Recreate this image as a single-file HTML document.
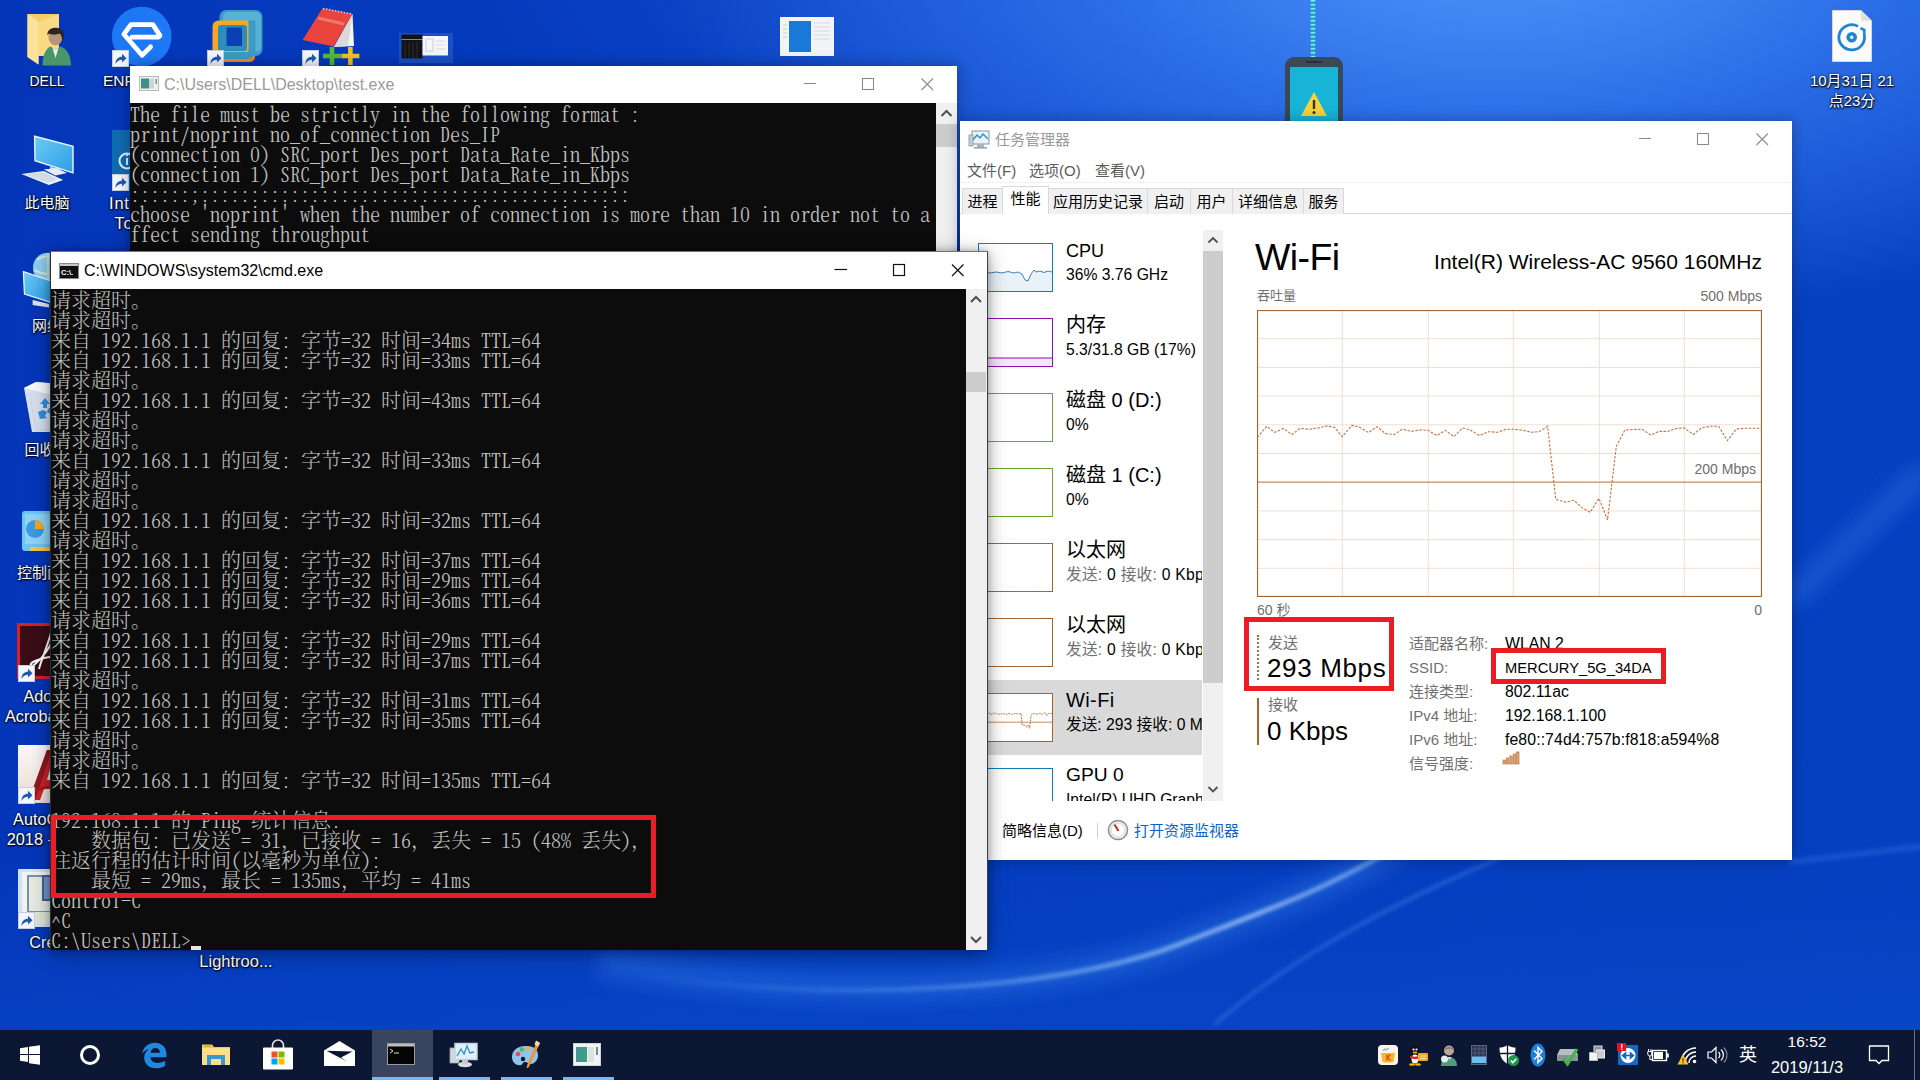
<!DOCTYPE html>
<html lang="zh-CN">
<head>
<meta charset="utf-8">
<title>Desktop</title>
<style>
*{box-sizing:border-box;margin:0;padding:0}
html,body{width:1920px;height:1080px;overflow:hidden}
body{position:relative;font-family:"Liberation Sans","Noto Sans CJK SC",sans-serif;font-size:15px;color:#000;
 background:#0841c2}
.abs{position:absolute}
#wall{position:absolute;left:0;top:0;width:1920px;height:1080px;
 background:
  radial-gradient(ellipse 840px 360px at 1500px -40px,rgba(78,150,250,.95) 0%,rgba(60,130,245,.6) 45%,rgba(40,100,230,0) 100%),
  radial-gradient(ellipse 1000px 480px at 1450px -120px,rgba(40,105,232,.9) 0%,rgba(30,90,220,.45) 60%,rgba(10,66,196,0) 100%),
  linear-gradient(180deg,rgba(4,60,190,0) 80%,rgba(8,78,205,.55) 100%),linear-gradient(90deg,#0536ba 0%,#053cbf 40%,#0540c1 100%)}
/* desktop icon labels */
.dl{position:absolute;color:#fff;font-size:15px;line-height:20px;white-space:nowrap;text-align:center;
 text-shadow:0 1px 2px rgba(0,0,0,.9),0 0 3px rgba(0,0,0,.7),1px 1px 1px rgba(0,0,0,.6)}

/* windows */
.win{position:absolute;background:#fff}
.tb{position:absolute;left:0;top:0;right:0;height:37px;background:#fff}
.tt{position:absolute;top:0;height:37px;line-height:37px;font-size:16px;white-space:nowrap}
.con{position:absolute;background:#0c0c0c;color:#c2c2c2;overflow:hidden;
 font-family:"Noto Serif CJK SC","Liberation Serif",serif;font-size:20px;line-height:20px;font-weight:300;padding-top:1px;
 font-feature-settings:"hwid","liga" 0,"clig" 0;font-variant-ligatures:none;white-space:pre}
.con div{height:20px}
.fw{font-feature-settings:"liga" 0}
.sb{position:absolute;background:#f0f0f0}
.cap{position:absolute;top:0;width:47px;height:37px}

.mn{margin-top:1px;font-size:15px;line-height:22px;color:#5c5c5c;white-space:nowrap}
.tab{position:absolute;top:67px;height:26px;background:#f0f0f0;border:1px solid #d9d9d9;border-bottom:none;font-size:15px;line-height:25px;text-align:center;white-space:nowrap;color:#000}
.tab.sel{top:65px;height:28px;background:#fff;line-height:24px}

.it{position:absolute;left:0;width:243px;height:75px}
.it1{position:absolute;left:106px;top:5.5px;font-size:20px;line-height:28px;white-space:nowrap}
.it2{position:absolute;left:106px;top:35px;font-size:15.7px;line-height:20px;white-space:nowrap}
.g{color:#707070}
.gl{font-size:13px;line-height:18px;color:#707070;white-space:nowrap}
.sl{font-size:15px;line-height:22px;color:#707070;white-space:nowrap}
.sv{font-size:26px;line-height:34px;white-space:nowrap}
.dk{font-size:15px;line-height:22px;color:#707070;white-space:nowrap}
.dv{font-size:15.8px;line-height:22px;white-space:nowrap}

.red{border:5px solid #ec1c24}
.ul{top:47px;height:3px;background:#76b9ed}
/* taskbar */
#task{position:absolute;left:0;top:1030px;width:1920px;height:50px;background:#0b1733}
</style>
</head>
<body>
<div id="wall"></div>
<svg class="abs" style="left:0;top:0" width="1920" height="1030" viewBox="0 0 1920 1030">
 <defs><filter id="b1" x="-20%" y="-20%" width="140%" height="140%"><feGaussianBlur stdDeviation="2.2"/></filter><filter id="b2" x="-20%" y="-20%" width="140%" height="140%"><feGaussianBlur stdDeviation="10"/></filter>
 <linearGradient id="sg" x1="0" x2="1" y1="0" y2="0"><stop offset="0" stop-color="#6fb0ff" stop-opacity="0"/><stop offset=".45" stop-color="#8cc4ff" stop-opacity=".55"/><stop offset=".8" stop-color="#bfe0ff" stop-opacity=".95"/><stop offset="1" stop-color="#9fd0ff" stop-opacity=".7"/></linearGradient></defs>
 <path d="M600 962C820 1004 1060 992 1180 944S1320 892 1400 846" stroke="#3d86ee" stroke-opacity=".35" stroke-width="26" fill="none" filter="url(#b2)"/>
 <path d="M640 975C840 1004 1060 990 1180 944S1320 890 1400 846" stroke="url(#sg)" stroke-width="3.500" fill="none" filter="url(#b1)"/>
 <path d="M1215 1024C1260 985 1340 925 1500 858" stroke="#6fb0ff" stroke-opacity=".5" stroke-width="2" fill="none" filter="url(#b1)"/>
 <path d="M1790 600L1925 470" stroke="#3f82ea" stroke-opacity=".35" stroke-width="22" fill="none" filter="url(#b2)"/>
 <path d="M1790 862L1925 846" stroke="#4a8cf0" stroke-opacity=".3" stroke-width="5" fill="none" filter="url(#b1)"/>
</svg>

<!-- desktop icons -->
<svg class="abs" style="left:24px;top:10px" width="52" height="58" viewBox="0 0 52 58"><path d="M3.500 4H35v42H14.500v8.500L3.500 47z" fill="#f6cf6a"/><path d="M3.500 4l11 7.500V54.500L3.500 47z" fill="#fbe39b"/><path d="M14.500 11.500L35 4v42H14.500z" fill="#f9db85"/><ellipse cx="31.500" cy="27" rx="7" ry="8.500" fill="#b9937c"/><path d="M23.500 25.500c-1.500-10 17-10.500 16.500 0 0 3-1 5-2 6 .5-4-1-7-2.500-8-3 1.500-8 1.500-10.500 0-1 1-1.500 1.500-1.500 2z" fill="#2b2620"/><path d="M18.500 55.500c0-11 4-17.500 8-19l5 3 5-3c6 2 10.500 8 10.500 19z" fill="#4a966a"/><path d="M28.500 38l3 10 3-10-3 1.500z" fill="#e9f1ec"/></svg>
<div class="dl" style="left:7px;top:71px;width:80px;font-size:14px">DELL</div>

<svg class="abs" style="left:111px;top:5px" width="62" height="62" viewBox="0 0 62 62"><circle cx="30.700" cy="31.500" r="29.800" fill="#1d78f6"/><path d="M39.600 41.900L31.100 50.300 12.900 29.200 19.900 19.600H41.900L49 30.600 47.500 32.200H21" stroke="#fff" stroke-width="4.800" fill="none" stroke-linejoin="round" stroke-linecap="round"/></svg>
<div class="dl" style="left:103px;top:71px;text-align:left;font-size:15.5px">ENF</div>
<svg class="abs" style="left:112px;top:50px" width="17" height="17" viewBox="0 0 17 17"><rect x=".5" y=".5" width="16" height="16" fill="#f3f6fb" stroke="#c5cfe0"/><path d="M3.500 14C3.500 9 6.500 6.800 10 6.800V3.800L14.500 8.200 10 12.600V9.800C7.500 9.800 5.200 10.800 3.500 14z" fill="#1f58b4"/></svg>

<svg class="abs" style="left:209px;top:8px" width="58" height="58" viewBox="0 0 58 58"><rect x="6" y="40" width="40" height="14" rx="5" fill="#ef8a1d"/><rect x="10.500" y="2" width="43" height="46" rx="7" fill="#3a9cc6"/><rect x="14" y="4" width="38" height="40" rx="5" fill="#56b3d6"/><rect x="3.500" y="12.500" width="39.500" height="36" rx="6" fill="#f7a823"/><rect x="9" y="17" width="29" height="26" rx="3" fill="#2f8db9"/><path d="M10.500 44V24a6 6 0 0 1 6-6h26.500v-5.500h10V42a6 6 0 0 1-6 6H16.500a6 6 0 0 1-6-4z" fill="none"/><path d="M43 12.500v30a5 5 0 0 1-5 5h-27" stroke="#3a9cc6" stroke-width="7" fill="none"/><rect x="17.500" y="19.500" width="15.500" height="18.500" fill="#0a3fb6"/></svg>
<svg class="abs" style="left:207px;top:50px" width="17" height="17" viewBox="0 0 17 17"><rect x=".5" y=".5" width="16" height="16" fill="#f3f6fb" stroke="#c5cfe0"/><path d="M3.500 14C3.500 9 6.500 6.800 10 6.800V3.800L14.500 8.200 10 12.600V9.800C7.500 9.800 5.200 10.800 3.500 14z" fill="#1f58b4"/></svg>

<svg class="abs" style="left:298px;top:6px" width="64" height="62" viewBox="0 0 64 62"><path d="M54.500 8L56 40 36 41z" fill="#f4f4f2"/><path d="M54.500 8L50 40 36 41z" fill="#dadad6"/><path d="M24.300 2.400L54.500 8 35.500 40.400 4.600 34z" fill="#e9453d"/><path d="M20 12L46 18" stroke="#f58d84" stroke-width="3" opacity=".7"/><path d="M25 2.500L54 8" stroke="#f7c9c4" stroke-width="1.600" stroke-dasharray="1.500 1.500"/><path d="M34 41v18M25 50h18" stroke="#55b937" stroke-width="4.600"/><path d="M52.400 41v18M43.400 50h18" stroke="#f1c21f" stroke-width="4.600"/></svg>
<svg class="abs" style="left:302px;top:50px" width="17" height="17" viewBox="0 0 17 17"><rect x=".5" y=".5" width="16" height="16" fill="#f3f6fb" stroke="#c5cfe0"/><path d="M3.500 14C3.500 9 6.500 6.800 10 6.800V3.800L14.500 8.200 10 12.600V9.800C7.500 9.800 5.200 10.800 3.500 14z" fill="#1f58b4"/></svg>

<svg class="abs" style="left:399px;top:33px" width="54" height="30" viewBox="0 0 54 30"><rect width="54" height="30" fill="#1b50c4"/><rect x="2.500" y="1.500" width="21" height="24" fill="#121316"/><path d="M2.500 6.500h21" stroke="#9aa" stroke-width=".8"/><path d="M6 9v16M10 9v16M14 9v16M18 9v16" stroke="#2a2622" stroke-width="1.500"/><rect x="23.500" y="3" width="25.500" height="19.500" fill="#f4f6f9"/><rect x="27" y="6" width="7" height="12" fill="none" stroke="#c9cfd8"/><path d="M37 8h9M37 12h9M37 16h9" stroke="#d5dae2"/></svg>

<svg class="abs" style="left:780px;top:17px" width="54" height="39" viewBox="0 0 54 39"><rect width="54" height="39" fill="#f3f4f6"/><rect x="9" y="4" width="22" height="31" fill="#1879d9"/><path d="M3 8h4M3 12h4M3 16h4M3 20h4" stroke="#c9ced6"/><path d="M34 6h16M34 10h16M34 14h16M34 18h16M34 22h16" stroke="#d5d9df"/></svg>

<!-- phone + cable -->
<svg class="abs" style="left:1284px;top:0" width="60" height="122" viewBox="0 0 60 122"><path d="M29 0V58" stroke="#1aa6cc" stroke-width="4.500"/><path d="M29 0V58" stroke="#8fe6f5" stroke-width="4.500" stroke-dasharray="1.500 2.500"/><path d="M1 66a9 9 0 0 1 9-9h40a9 9 0 0 1 9 9v56H1z" fill="#3a4957"/><rect x="6" y="67" width="48" height="55" fill="#17b4d8"/><rect x="22" y="61" width="16" height="2" rx="1" fill="#23303b"/><path d="M30 92l13 24H17z" fill="#f5d33a"/><rect x="28.800" y="100" width="2.400" height="9" fill="#3b3010"/><circle cx="30" cy="112.500" r="1.500" fill="#3b3010"/></svg>

<!-- file top right -->
<svg class="abs" style="left:1832px;top:10px" width="40" height="52" viewBox="0 0 40 53" preserveAspectRatio="none"><path d="M.500 .500H29L39.500 11V52.500H.500z" fill="#fbfbfa" stroke="#e4e1d8" stroke-width=".8"/><path d="M29 .500V11H39.500z" fill="#e6e2d2"/><path d="M26 16.700A12.800 12.800 0 1 0 32.300 25.500" stroke="#1c86d6" stroke-width="2.800" fill="none"/><path d="M32.300 26V20.200L28.500 18.600" stroke="#1c86d6" stroke-width="2.500" fill="none"/><circle cx="19.700" cy="27.800" r="5.300" fill="#1c86d6"/><circle cx="19.700" cy="27.800" r="1.700" fill="#fbfbfa"/></svg>
<div class="dl" style="left:1802px;top:70.5px;width:100px;line-height:20px">10月31日 21<br>点23分</div>

<!-- left column -->
<svg class="abs" style="left:20px;top:133px" width="56" height="56" viewBox="0 0 56 56"><defs><linearGradient id="pcg" x1="0" y1="0" x2="1" y2="1"><stop offset="0" stop-color="#6ccaf7"/><stop offset="1" stop-color="#2b9fe6"/></linearGradient></defs><path d="M14.600 3.200L53 13.400V39.900L15 27.700z" fill="url(#pcg)" stroke="#e6f5fd" stroke-width="1.400"/><path d="M30 33.500l10 3.200v4.300l-10-2.500z" fill="#c5d2dc"/><path d="M23.800 36.500l12.500-1.600 10.700 5-11.500 2.600z" fill="#e6edf2"/><path d="M1.400 40.900L23.800 37.900 43.200 47 28.900 52.100z" fill="#eef2f6"/><path d="M5 41.300l18-2.400 15.500 7.300-10.500 3.900z" fill="#cbd5de" opacity=".8"/></svg>
<div class="dl" style="left:7px;top:193px;width:80px">此电脑</div>

<svg class="abs" style="left:112px;top:130px" width="60" height="60" viewBox="0 0 60 60"><rect width="60" height="60" fill="#0f6cb2"/><circle cx="15" cy="31" r="7.500" fill="none" stroke="#e3f1fb" stroke-width="2"/><path d="M15 28v7" stroke="#e3f1fb" stroke-width="2"/><circle cx="15" cy="25" r="1.200" fill="#e3f1fb"/></svg>
<svg class="abs" style="left:112px;top:174px" width="17" height="17" viewBox="0 0 17 17"><rect x=".5" y=".5" width="16" height="16" fill="#f3f6fb" stroke="#c5cfe0"/><path d="M3.500 14C3.500 9 6.500 6.800 10 6.800V3.800L14.500 8.200 10 12.600V9.800C7.500 9.800 5.200 10.800 3.500 14z" fill="#1f58b4"/></svg>
<div class="dl" style="left:109px;top:193px;text-align:left;font-size:16.5px;letter-spacing:.8px">Intel(R)<br>&nbsp;To</div>

<svg class="abs" style="left:20px;top:250px" width="56" height="60" viewBox="0 0 56 60"><circle cx="28" cy="17.700" r="15" fill="#8fcdf2"/><path d="M17 10c6-5 16-5 22 0M14 20c9 5 19 5 28 0M28 3v29" stroke="#d6efd0" stroke-width="2.200" fill="none" opacity=".85"/><path d="M3.400 21.700L30.900 30.900V52.300L4.500 44.100z" fill="url(#pcg)" stroke="#e6f5fd" stroke-width="1.300"/><path d="M12.600 50l16.400 4v3.500l-16.400-2.500z" fill="#dfe7ee"/></svg>
<div class="dl" style="left:7px;top:316px;width:80px">网络</div>

<svg class="abs" style="left:20px;top:378px" width="56" height="56" viewBox="0 0 56 56"><path d="M4 10l12-6 24 2 12 6-6 42H12z" fill="#e8eef4" opacity=".92"/><path d="M4 10l12-6 24 2 12 6-24 4z" fill="#f7fafc"/><path d="M10 16l6 36h22" stroke="#c9d3dd" stroke-width="1" fill="none"/><g fill="#2f8fe0"><path d="M20 26l5-6 5 6-3 0 0 4-4 0 0-4z"/><path d="M34 30l3 7-7 2 1-3-4-2 2-4z"/><path d="M18 34l2 7 7-1-2-2 2-4-4-2z"/></g></svg>
<div class="dl" style="left:7px;top:440px;width:80px">回收站</div>

<svg class="abs" style="left:20px;top:509px" width="56" height="46" viewBox="0 0 56 46"><rect x="2" y="2" width="52" height="40" rx="3" fill="#6cc4f2"/><rect x="5" y="5" width="46" height="30" fill="#8fd3f6"/><circle cx="15" cy="20" r="9" fill="#3b9be0"/><path d="M15 20V11a9 9 0 0 1 9 9z" fill="#f6a623"/><path d="M30 12h16M30 18h16M30 24h12" stroke="#4aa8e6" stroke-width="2"/><rect x="10" y="38" width="36" height="4" fill="#f6c445"/></svg>
<div class="dl" style="left:7px;top:563px;width:80px">控制面板</div>

<svg class="abs" style="left:17px;top:623px" width="58" height="58" viewBox="0 0 58 58"><rect x="1.500" y="1.500" width="55" height="53" fill="#3a0d16" stroke="#d3202a" stroke-width="3"/><path d="M22 46c2-8 8-22 12-36 1-3 4-2 3 2-2 10-10 22-20 30-3 2-5-1-1-3 8-4 18-6 28-5" stroke="#fff" stroke-width="2" fill="none"/></svg>
<svg class="abs" style="left:18px;top:665px" width="17" height="17" viewBox="0 0 17 17"><rect x=".5" y=".5" width="16" height="16" fill="#f3f6fb" stroke="#c5cfe0"/><path d="M3.500 14C3.500 9 6.500 6.800 10 6.800V3.800L14.500 8.200 10 12.600V9.800C7.500 9.800 5.200 10.800 3.500 14z" fill="#1f58b4"/></svg>
<div class="dl" style="left:3px;top:686px;width:88px;font-size:16.300px">Adobe<br>Acrobat DC</div>

<svg class="abs" style="left:17px;top:744px" width="58" height="60" viewBox="0 0 58 60"><defs><linearGradient id="acg" x1="0" y1="0" x2="0" y2="1"><stop offset="0" stop-color="#fbf7f4"/><stop offset="1" stop-color="#e9dcd6"/></linearGradient></defs><path d="M1 1h42l14 12v46H1z" fill="url(#acg)"/><path d="M12 56L30 6h12l14 50H45l-3-11H27l-4 11z" fill="#c9242b"/><path d="M30 36h10l-5-18z" fill="#f1e6e1"/><path d="M12 56L30 6h5L18 56z" fill="#8f171d"/><path d="M14 48c8-4 20-6 34-5" stroke="#a51b22" stroke-width="3" fill="none"/></svg>
<svg class="abs" style="left:18px;top:787px" width="17" height="17" viewBox="0 0 17 17"><rect x=".5" y=".5" width="16" height="16" fill="#f3f6fb" stroke="#c5cfe0"/><path d="M3.500 14C3.500 9 6.500 6.800 10 6.800V3.800L14.500 8.200 10 12.600V9.800C7.500 9.800 5.200 10.800 3.500 14z" fill="#1f58b4"/></svg>
<div class="dl" style="left:-7px;top:809px;width:108px;font-size:16.300px">AutoCAD<br>2018 - 简...</div>

<svg class="abs" style="left:17px;top:868px" width="58" height="60" viewBox="0 0 58 60"><rect x="1" y="1" width="56" height="58" fill="#cfe3f4"/><rect x="5" y="4" width="48" height="52" fill="#f0f3ee"/><rect x="11" y="8" width="40" height="36" fill="#e6e9e2" stroke="#7d8ea6" stroke-width="2"/><rect x="26" y="8" width="25" height="24" fill="#6f94c9" stroke="#3e5f94" stroke-width="2"/><rect x="5" y="44" width="48" height="12" fill="#dfe6d6"/></svg>
<svg class="abs" style="left:18px;top:912px" width="17" height="17" viewBox="0 0 17 17"><rect x=".5" y=".5" width="16" height="16" fill="#f3f6fb" stroke="#c5cfe0"/><path d="M3.500 14C3.500 9 6.500 6.800 10 6.800V3.800L14.500 8.200 10 12.600V9.800C7.500 9.800 5.200 10.800 3.500 14z" fill="#1f58b4"/></svg>
<div class="dl" style="left:3px;top:932px;width:88px;font-size:16.300px">Creo</div>

<div class="dl" id="t_lr" style="font-size:16.5px;left:186px;top:951px;width:100px">Lightroo...</div>

<div class="win" id="testwin" style="left:130px;top:66px;width:827px;height:200px;box-shadow:0 0 14px rgba(0,0,0,.35)">
 <div class="tb"></div>
 <svg class="abs" style="left:9px;top:10px" width="20" height="16" viewBox="0 0 20 16"><rect x=".5" y=".5" width="19" height="14" fill="#eef1ef" stroke="#b5b9b7"/><rect x="2" y="2.5" width="8" height="10" fill="#3f8f86"/><rect x="10" y="2.5" width="5" height="10" fill="#c9d6d2"/><rect x="16.5" y="3" width="1.5" height="5" fill="#7d8a86"/></svg>
 <div class="tt" id="t_test" style="left:34px;color:#9a9a9a;top:0px">C:\Users\DELL\Desktop\test.exe</div>
 <svg class="abs" style="left:660px;top:0" width="167" height="37" viewBox="0 0 167 37"><g stroke="#8c8c8c" stroke-width="1.1" fill="none"><path d="M14 17.5h12"/><rect x="72.5" y="12.5" width="11" height="11"/><path d="M131.5 12.5l11.5 11.5M143 12.5l-11.5 11.5"/></g></svg>
 <div class="con" id="con_test" style="left:0;top:37px;width:806px;height:163px"><div>The file must be strictly in the following format :</div><div>print/noprint no_of_connection Des_IP</div><div>(connection 0) SRC_port Des_port Data_Rate_in_Kbps</div><div>(connection 1) SRC_port Des_port Data_Rate_in_Kbps</div><div>::::::;:::::::::::::::::::::::::::::::::::::::::::</div><div>choose 'noprint' when the number of connection is more than 10 in order not to a</div><div>ffect sending throughput</div></div>
 <div class="sb" style="left:806px;top:37px;width:21px;height:163px">
  <svg class="abs" style="left:0;top:0" width="21" height="21" viewBox="0 0 21 21"><path d="M5.5 13l5-5 5 5" stroke="#505050" stroke-width="2" fill="none"/></svg>
  <div class="abs" style="left:0;top:21px;width:21px;height:23px;background:#cdcdcd"></div>
 </div>
</div>

<div class="win" id="tm" style="left:960px;top:121px;width:832px;height:739px;box-shadow:0 0 14px rgba(0,0,0,.3)">
 <svg class="abs" style="left:8px;top:9px" width="22" height="20" viewBox="0 0 22 20"><rect x="4" y="1" width="17" height="13" fill="#e9f3fa" stroke="#8a949c"/><path d="M5 10l4-5 3 3 3-4 5 5" stroke="#2f8fc4" stroke-width="1.4" fill="none"/><rect x="1" y="5" width="4" height="11" fill="#c7cdd2" stroke="#8a949c" stroke-width=".8"/><rect x="9" y="14" width="7" height="3" fill="#aab3ba"/><rect x="6" y="17" width="13" height="1.6" fill="#98a2aa"/></svg>
 <div class="tt" id="t_tm" style="font-size:15px;left:35px;color:#9a9a9a;top:0">任务管理器</div>
 <svg class="abs" style="left:665px;top:0" width="167" height="37" viewBox="0 0 167 37"><g stroke="#8c8c8c" stroke-width="1.1" fill="none"><path d="M14 17.5h12"/><rect x="72.5" y="12.5" width="11" height="11"/><path d="M131.5 12.5l11.5 11.5M143 12.5l-11.5 11.5"/></g></svg>
 <!-- menu -->
 <div class="abs mn" style="left:7px;top:38px">文件(F)</div>
 <div class="abs mn" style="left:69px;top:38px">选项(O)</div>
 <div class="abs mn" style="left:135px;top:38px">查看(V)</div>
 <div class="abs" style="left:0;top:61px;width:832px;height:1px;background:#f0f0f0"></div>
 <!-- tabs -->
 <div class="abs" style="left:0;top:92px;width:832px;height:1px;background:#d9d9d9"></div>
 <div class="tab" style="left:2px;width:41px">进程</div>
 <div class="tab" style="left:88px;width:100px">应用历史记录</div>
 <div class="tab" style="left:187px;width:44px">启动</div>
 <div class="tab" style="left:230px;width:43px">用户</div>
 <div class="tab" style="left:272px;width:72px">详细信息</div>
 <div class="tab" style="left:343px;width:41px">服务</div>
 <div class="tab sel" style="left:42px;width:47px">性能</div>
 <div class="abs" id="tml" style="left:0;top:109px;width:242px;height:571px;overflow:hidden"><div class="it" style="top:0px"><svg class="abs" style="left:18px;top:13px" width="75" height="49" viewBox="0 0 75 49"><rect x=".5" y=".5" width="74" height="48" fill="#fff" stroke="#117dbb"/><path d="M1 30 L8 29 12 30 18 29 24 30 30 28.5 36 30 40 29 44 31 47 37 50 38 53 31 56 27 58 29 62 28 66 29.5 70 28 74 29 V48 H1Z" fill="#e9f2f9"/><path d="M1 30 L8 29 12 30 18 29 24 30 30 28.5 36 30 40 29 44 31 47 37 50 38 53 31 56 27 58 29 62 28 66 29.5 70 28 74 29" stroke="#3a86b8" stroke-width="1" fill="none"/></svg><div class="it1" style="font-size:18px;top:6.5px">CPU</div><div class="it2">36% 3.76 GHz</div></div><div class="it" style="top:75px"><svg class="abs" style="left:18px;top:13px" width="75" height="49" viewBox="0 0 75 49"><rect x=".5" y=".5" width="74" height="48" fill="#fff" stroke="#8b12ae"/><rect x="1" y="40" width="73" height="8" fill="#f4e8f8"/><path d="M1 40H74" stroke="#8b12ae" stroke-width="1"/></svg><div class="it1">内存</div><div class="it2">5.3/31.8 GB (17%)</div></div><div class="it" style="top:150px"><svg class="abs" style="left:18px;top:13px" width="75" height="49" viewBox="0 0 75 49"><rect x=".5" y=".5" width="74" height="48" fill="#fff" stroke="#6fa433"/></svg><div class="it1">磁盘 0 (D:)</div><div class="it2">0%</div></div><div class="it" style="top:225px"><svg class="abs" style="left:18px;top:13px" width="75" height="49" viewBox="0 0 75 49"><rect x=".5" y=".5" width="74" height="48" fill="#fff" stroke="#6fa433"/></svg><div class="it1">磁盘 1 (C:)</div><div class="it2">0%</div></div><div class="it" style="top:300px"><svg class="abs" style="left:18px;top:13px" width="75" height="49" viewBox="0 0 75 49"><rect x=".5" y=".5" width="74" height="48" fill="#fff" stroke="#a8632c"/></svg><div class="it1">以太网</div><div class="it2" style="letter-spacing:.25px"><span class="g">发送:</span> 0 <span class="g">接收:</span> 0 Kbps</div></div><div class="it" style="top:375px"><svg class="abs" style="left:18px;top:13px" width="75" height="49" viewBox="0 0 75 49"><rect x=".5" y=".5" width="74" height="48" fill="#fff" stroke="#a8632c"/></svg><div class="it1">以太网</div><div class="it2" style="letter-spacing:.25px"><span class="g">发送:</span> 0 <span class="g">接收:</span> 0 Kbps</div></div><div class="it" style="top:450px;background:#d9d9d9"><svg class="abs" style="left:18px;top:13px" width="75" height="49" viewBox="0 0 75 49"><rect x=".5" y=".5" width="74" height="48" fill="#fff" stroke="#a8632c"/><path d="M1 29.2H74" stroke="#c98a5a" stroke-width="1"/><path d="M1.0 21.9 L2.4 20.1 L3.5 21.0 L4.8 20.4 L6.1 21.4 L7.2 20.4 L8.6 20.5 L9.9 20.3 L11.1 20.0 L12.2 20.2 L13.3 21.8 L14.7 19.9 L15.8 20.2 L17.1 21.1 L18.3 20.1 L19.6 21.2 L20.8 21.4 L22.0 20.5 L23.3 20.9 L24.7 20.6 L25.8 20.7 L27.0 21.5 L28.2 20.7 L29.5 21.8 L30.7 20.3 L31.8 20.6 L33.1 21.5 L34.5 20.9 L35.8 21.0 L37.0 20.5 L38.1 20.5 L39.5 20.7 L40.6 21.0 L41.8 20.9 L43.0 20.1 L44.2 32.0 L45.7 32.5 L46.8 32.2 L48.0 33.4 L49.2 34.1 L50.4 31.9 L51.7 35.4 L52.9 23.4 L54.2 20.7 L55.4 20.6 L56.7 20.5 L57.9 21.5 L59.1 20.9 L60.4 20.9 L61.6 20.4 L62.7 20.3 L64.1 21.4 L65.2 20.3 L66.6 20.1 L67.7 20.1 L69.0 22.4 L70.3 20.5 L71.5 20.4 L72.7 20.4 L74.0 20.4" stroke="#c9703f" stroke-width="1" stroke-dasharray="2 1" fill="none"/></svg><div class="it1" style="letter-spacing:.4px">Wi-Fi</div><div class="it2">发送: 293 接收: 0 Mbps</div></div><div class="it" style="top:525px"><svg class="abs" style="left:18px;top:13px" width="75" height="49" viewBox="0 0 75 49"><rect x=".5" y=".5" width="74" height="48" fill="#fff" stroke="#117dbb"/></svg><div class="it1" style="font-size:19.2px">GPU 0</div><div class="it2">Intel(R) UHD Graphics 630</div></div></div><div class="abs" style="left:243px;top:109px;width:20px;height:571px;background:#f0f0f0"><svg class="abs" style="left:0;top:0" width="20" height="21" viewBox="0 0 20 21"><path d="M5.5 12.5l4.5-4.5 4.5 4.5" stroke="#505050" stroke-width="1.8" fill="none"/></svg><div class="abs" style="left:0;top:21px;width:20px;height:432px;background:#cdcdcd"></div><svg class="abs" style="left:0;top:549px" width="20" height="21" viewBox="0 0 20 21"><path d="M5.5 8l4.5 4.5 4.5-4.5" stroke="#505050" stroke-width="1.8" fill="none"/></svg></div>
 <div class="abs" id="t_wifi" style="left:295px;top:112px;font-size:37.5px;letter-spacing:-.6px;line-height:48px;white-space:nowrap">Wi-Fi</div><div class="abs" id="t_intel" style="right:30px;top:128px;font-size:21px;line-height:26px;white-space:nowrap">Intel(R) Wireless-AC 9560 160MHz</div><div class="abs gl" style="left:297px;top:166px">吞吐量</div><div class="abs gl" id="t_500" style="right:30px;top:166px;font-size:14px">500 Mbps</div><svg class="abs" style="left:297px;top:189px" width="505" height="287" viewBox="0 0 505 287"><rect x="0" y="0" width="505" height="287" fill="#fff"/><path d="M0 28.7H505 M0 57.4H505 M0 86.1H505 M0 114.8H505 M0 143.5H505 M0 200.9H505 M0 229.6H505 M0 258.3H505 M85.3 0V287 M171.3 0V287 M256.3 0V287 M342.3 0V287 M427.3 0V287" stroke="#f0dfd2" stroke-width="1" fill="none"/><path d="M0 172.2H505" stroke="#c98a5a" stroke-width="1.2" fill="none"/><path d="M0.3 127.4 L9.8 116.3 L17.6 122.3 L26.5 118.5 L35.0 124.5 L42.8 118.5 L52.3 119.2 L61.7 117.9 L69.6 116.0 L77.5 117.3 L85.3 126.7 L94.8 115.4 L102.7 117.3 L111.5 122.6 L120.0 116.7 L128.5 123.6 L137.3 124.5 L145.2 119.2 L154.6 121.4 L164.0 119.8 L171.3 120.4 L179.8 125.5 L188.3 120.4 L197.1 126.7 L205.3 117.9 L212.9 119.8 L222.3 125.5 L231.7 121.7 L240.6 122.3 L249.1 119.2 L256.9 119.2 L266.4 120.4 L274.3 122.3 L282.1 121.7 L290.6 116.3 L298.8 189.4 L308.9 192.2 L316.8 190.3 L325.3 197.9 L333.1 202.3 L342.0 188.4 L350.5 209.9 L359.3 136.5 L367.8 120.1 L376.6 119.5 L385.1 119.2 L393.9 125.2 L401.8 121.4 L410.6 121.4 L419.1 118.5 L427.0 117.9 L436.4 124.5 L444.3 117.9 L453.7 116.3 L461.6 116.3 L470.4 130.5 L479.2 119.2 L487.7 118.2 L496.2 118.2 L504.7 118.2" stroke="#c9703f" stroke-width="1.1" stroke-dasharray="2.5 1.5" fill="none"/><rect x=".5" y=".5" width="504" height="286" fill="none" stroke="#a8632c" stroke-width="1.2"/><text x="499" y="164" text-anchor="end" font-family="Liberation Sans,sans-serif" font-size="14" fill="#6d6d6d">200 Mbps</text></svg><div class="abs gl" style="left:297px;top:480px;font-size:14px">60 秒</div><div class="abs gl" style="right:30px;top:480px;font-size:14px">0</div><div class="abs" style="left:297px;top:514px;width:0;height:45px;border-left:2px dotted #b5683a"></div><div class="abs sl" style="left:308px;top:511px">发送</div><div class="abs sv" id="t_293" style="letter-spacing:.65px;left:307px;top:530px">293 Mbps</div><div class="abs" style="left:297px;top:577px;width:2px;height:47px;background:#a8632c"></div><div class="abs sl" style="left:308px;top:573px">接收</div><div class="abs sv" id="t_0k" style="left:307px;top:593px">0 Kbps</div><div class="abs dk" style="left:449px;top:511.5px">适配器名称:</div><div class="abs dv" id="dv0" style="left:545px;top:511.5px">WLAN 2</div><div class="abs dk" style="left:449px;top:535.5px">SSID:</div><div class="abs dv" id="dv1" style="font-size:14.7px;left:545px;top:535.5px">MERCURY_5G_34DA</div><div class="abs dk" style="left:449px;top:559.5px">连接类型:</div><div class="abs dv" id="dv2" style="left:545px;top:559.5px">802.11ac</div><div class="abs dk" style="left:449px;top:583.5px">IPv4 地址:</div><div class="abs dv" id="dv3" style="left:545px;top:583.5px">192.168.1.100</div><div class="abs dk" style="left:449px;top:607.5px">IPv6 地址:</div><div class="abs dv" id="dv4" style="letter-spacing:.1px;left:545px;top:607.5px">fe80::74d4:757b:f818:a594%8</div><div class="abs dk" style="left:449px;top:631.5px">信号强度:</div><svg class="abs" style="left:542px;top:630px" width="18" height="14" viewBox="0 0 18 14"><g fill="#e2a36f" stroke="#b97a47" stroke-width=".7"><rect x="1" y="9" width="2.4" height="4"/><rect x="4.4" y="7" width="2.4" height="6"/><rect x="7.8" y="5" width="2.4" height="8"/><rect x="11.2" y="3" width="2.4" height="10"/><rect x="14.6" y="1" width="2.4" height="12"/></g></svg>
 <!-- bottom -->
 <svg class="abs" style="left:-3px;top:698px" width="22" height="22" viewBox="0 0 22 22"><circle cx="11" cy="11" r="9.5" fill="#fff" stroke="#9a9a9a"/><path d="M7 13l4-4 4 4" stroke="#666" stroke-width="1.5" fill="none"/></svg>
 <div class="abs" id="t_brief" style="left:42px;top:699px;font-size:15px;line-height:22px;white-space:nowrap">简略信息(D)</div>
 <div class="abs" style="left:137px;top:702px;width:1px;height:15px;background:#d0d0d0"></div>
 <svg class="abs" style="left:147px;top:698px" width="22" height="22" viewBox="0 0 22 22"><circle cx="11" cy="11" r="9.5" fill="#f4f4f2" stroke="#8f8f8f" stroke-width="1.6"/><circle cx="11" cy="11" r="7" fill="#fff" stroke="#d5d5d5"/><path d="M11.5 12L7.5 5.5" stroke="#c5242a" stroke-width="2"/></svg>
 <div class="abs" id="t_resmon" style="left:174px;top:699px;font-size:15px;line-height:22px;color:#0a64c8;white-space:nowrap">打开资源监视器</div>
</div>

<div class="win" id="cmdwin" style="left:50px;top:251px;width:938px;height:699px;border:1px solid #3a3f48;border-top-color:#70757d;border-left-color:#2a2d33;border-bottom-color:#1a1a1a;box-shadow:0 3px 18px rgba(0,0,0,.38),0 0 6px rgba(0,0,0,.22)">
 <div class="tb" style="height:37px"></div>
 <svg class="abs" style="left:8px;top:11px" width="20" height="16" viewBox="0 0 20 16"><rect x="0" y="0" width="20" height="16" fill="#111"/><rect x="0" y="0" width="20" height="3" fill="#c8c8c8"/><rect x="0.5" y="0.5" width="19" height="15" fill="none" stroke="#8a8a8a"/><text x="2" y="12" font-family="Liberation Sans,sans-serif" font-size="7.5" font-weight="bold" fill="#fff">C:\.</text></svg>
 <div class="tt" id="t_cmd" style="left:33px;color:#000;top:0px">C:\WINDOWS\system32\cmd.exe</div>
 <svg class="abs" style="left:769px;top:0" width="167" height="37" viewBox="0 0 167 37"><g stroke="#111" stroke-width="1.2" fill="none"><path d="M14.5 17.5h12.5"/><rect x="73.5" y="12.5" width="11" height="11"/><path d="M132 12.5l11.5 11.5M143.5 12.5l-11.5 11.5"/></g></svg>
 <div class="con" id="con_cmd" style="left:0;top:37px;width:915px;height:661px"><div>请求超时。</div><div>请求超时。</div><div>来自 192.168.1.1 的回复: 字节=32 时间=34ms TTL=64</div><div>来自 192.168.1.1 的回复: 字节=32 时间=33ms TTL=64</div><div>请求超时。</div><div>来自 192.168.1.1 的回复: 字节=32 时间=43ms TTL=64</div><div>请求超时。</div><div>请求超时。</div><div>来自 192.168.1.1 的回复: 字节=32 时间=33ms TTL=64</div><div>请求超时。</div><div>请求超时。</div><div>来自 192.168.1.1 的回复: 字节=32 时间=32ms TTL=64</div><div>请求超时。</div><div>来自 192.168.1.1 的回复: 字节=32 时间=37ms TTL=64</div><div>来自 192.168.1.1 的回复: 字节=32 时间=29ms TTL=64</div><div>来自 192.168.1.1 的回复: 字节=32 时间=36ms TTL=64</div><div>请求超时。</div><div>来自 192.168.1.1 的回复: 字节=32 时间=29ms TTL=64</div><div>来自 192.168.1.1 的回复: 字节=32 时间=37ms TTL=64</div><div>请求超时。</div><div>来自 192.168.1.1 的回复: 字节=32 时间=31ms TTL=64</div><div>来自 192.168.1.1 的回复: 字节=32 时间=35ms TTL=64</div><div>请求超时。</div><div>请求超时。</div><div>来自 192.168.1.1 的回复: 字节=32 时间=135ms TTL=64</div><div></div><div>192.168.1.1 的 Ping 统计信息:</div><div>    数据包: 已发送 = 31<span class="fw">，</span>已接收 = 16<span class="fw">，</span>丢失 = 15 (48% 丢失)<span class="fw">，</span></div><div>往返行程的估计时间(以毫秒为单位):</div><div>    最短 = 29ms<span class="fw">，</span>最长 = 135ms<span class="fw">，</span>平均 = 41ms</div><div>Control-C</div><div>^C</div><div>C:\Users\DELL&gt;<span style="display:inline-block;width:10px;height:5px;background:#e6e6dc;vertical-align:-3px"></span></div></div>
 <div class="sb" style="left:915px;top:37px;width:21px;height:661px">
  <svg class="abs" style="left:0;top:0" width="20" height="21" viewBox="0 0 20 21"><path d="M5 13l5-5 5 5" stroke="#505050" stroke-width="2" fill="none"/></svg>
  <div class="abs" style="left:0;top:83px;width:20px;height:20px;background:#cdcdcd"></div>
  <svg class="abs" style="left:0;top:640px" width="20" height="21" viewBox="0 0 20 21"><path d="M5 8l5 5 5-5" stroke="#505050" stroke-width="2" fill="none"/></svg>
 </div>
</div>

<div class="abs red" style="left:51px;top:815px;width:605px;height:83px"></div>
<div class="abs red" style="left:1244px;top:617px;width:150px;height:74px"></div>
<div class="abs red" style="left:1491px;top:648px;width:175px;height:36px"></div>

<div id="task">
 <!-- start -->
 <svg class="abs" style="left:19px;top:14px" width="22" height="22" viewBox="0 0 22 22"><path d="M1 4.2L9 3v7H1zM10 2.8L21 1.2V10H10zM1 11h8v7L1 16.8zM10 11h11v9.8L10 19.2z" fill="#fff"/></svg>
 <!-- cortana -->
 <div class="abs" style="left:80px;top:15px;width:20px;height:20px;border-radius:50%;border:3px solid #fff"></div>
 <!-- edge -->
 <svg class="abs" style="left:141px;top:12px" width="27" height="27" viewBox="0 0 27 27"><path d="M1 12C2.5 4.5 8 .8 14 .8c7 0 11.5 5 11.5 11.7v2.7H9.5c.3 4 3.400 5.700 7 5.700 2.800 0 5.200-.8 7.500-2.200v5.300C21.500 25.500 18.500 26.300 15 26.300 7.500 26.300 3.200 21.500 3.200 15.500c0-3.800 2-6.800 5-8.500C5 7.500 2.500 9.500 1 12zm8.600-1.200h9.300c0-3-1.800-4.900-4.500-4.900s-4.500 2-4.800 4.900z" fill="#1f88e0"/></svg>
 <!-- explorer -->
 <svg class="abs" style="left:202px;top:12px" width="28" height="24" viewBox="0 0 28 24"><path d="M0 2.500h10l2 2.500h16v18H0z" fill="#f2c84b"/><path d="M0 6h28v17H0z" fill="#fbe08a"/><path d="M5 13h18v10H5z" fill="#3c97d8"/><path d="M9 17h10v6H9z" fill="#fbe08a"/><rect x="2" y="3.500" width="7" height="1.500" fill="#e0a92a"/></svg>
 <!-- store -->
 <svg class="abs" style="left:263px;top:9px" width="30" height="31" viewBox="0 0 30 31"><path d="M9.500 9V6.500a5.500 5.500 0 0 1 11 0V9" stroke="#e6e6e6" stroke-width="1.600" fill="none"/><rect x="0" y="8.500" width="30" height="22" rx="1" fill="#fff"/><rect x="8.500" y="12.500" width="6" height="6" fill="#f25022"/><rect x="15.500" y="12.500" width="6" height="6" fill="#7fba00"/><rect x="8.500" y="19.500" width="6" height="6" fill="#00a4ef"/><rect x="15.500" y="19.500" width="6" height="6" fill="#ffb900"/></svg>
 <!-- mail -->
 <svg class="abs" style="left:324px;top:11px" width="31" height="25" viewBox="0 0 31 25"><path d="M0 9.500L15.500 0 31 9.500V25H0z" fill="#fff"/><path d="M2.500 9.800L28.500 10.500 17 16.500 23 20.500z" fill="#0c1530"/></svg>
 <!-- cmd active -->
 <div class="abs" style="left:372px;top:0;width:61px;height:50px;background:#39445f"></div>
 <svg class="abs" style="left:387px;top:13px" width="28" height="22" viewBox="0 0 28 22"><rect x=".5" y=".5" width="27" height="21" fill="#050505" stroke="#9a9a9a"/><rect x="1" y="1" width="26" height="2.500" fill="#bdbdbd"/><path d="M3 6l3 2-3 2M7 10h5" stroke="#ddd" stroke-width="1" fill="none"/></svg>
 <!-- taskmgr -->
 <svg class="abs" style="left:449px;top:12px" width="29" height="27" viewBox="0 0 29 27"><rect x="1" y="6" width="9" height="15" fill="#cfd6dc" stroke="#9aa4ac" stroke-width=".8"/><rect x="6" y="1.500" width="22" height="16" fill="#dff0fb" stroke="#c9d2d9" stroke-width="1.500"/><path d="M8 14l4-7 3 5 3-8 3 7 4-1" stroke="#2f8fc4" stroke-width="1.300" fill="none"/><ellipse cx="16" cy="22.500" rx="7" ry="2.800" fill="#dcdcdc"/><rect x="13" y="17.500" width="6" height="4" fill="#c2c8cd"/></svg>
 <!-- paint -->
 <svg class="abs" style="left:511px;top:10px" width="31" height="30" viewBox="0 0 31 30"><path d="M14 6C6 6 1 11 1 17s5 9 9 8c2-.5 1.500-3 4-3s5 4 9 1c4-3 5-8 3-12S20 6 14 6z" fill="#8ec4ea"/><circle cx="7" cy="14" r="2.300" fill="#d9534f"/><circle cx="11" cy="9.500" r="2.300" fill="#5cb85c"/><circle cx="17" cy="8.500" r="2.300" fill="#f0ad4e"/><circle cx="12" cy="19" r="2.200" fill="#0c1530"/><path d="M26 1l3 2-11 24-2.500 1.500.500-3z" fill="#e8963a"/><path d="M25 .5l4 2.500-2 3.500-3.500-2z" fill="#f4d9a8"/></svg>
 <!-- test.exe -->
 <svg class="abs" style="left:573px;top:13px" width="28" height="23" viewBox="0 0 28 23"><rect x=".5" y=".5" width="27" height="22" fill="#f1f4f2" stroke="#cfd4d1"/><rect x="3" y="4" width="11" height="15" fill="#3f9a8c"/><rect x="15" y="4" width="6" height="15" fill="#d9e4df"/><rect x="23" y="4" width="2" height="8" fill="#6d8f88"/></svg>
 <!-- underlines -->
 <div class="abs ul" style="left:372px;width:61px"></div>
 <div class="abs ul" style="left:439px;width:51px"></div>
 <div class="abs ul" style="left:501px;width:51px"></div>
 <div class="abs ul" style="left:563px;width:51px"></div>
 <!-- tray -->
 <svg class="abs" style="left:1378px;top:15px" width="20" height="20" viewBox="0 0 20 20"><rect width="20" height="20" rx="4" fill="#fdf6e8"/><path d="M3 8h14l-1.500 8a2 2 0 0 1-2 1.500H6.500a2 2 0 0 1-2-1.500z" fill="#f8b62b"/><path d="M9 9.500v6M12.500 9.500L9.500 12.500l3 3" stroke="#e8541a" stroke-width="1.600" fill="none"/><path d="M5 5.500l2-1.500 2 1.500M9 4l2-1" stroke="#6aa7e8" stroke-width="1.200" fill="none"/></svg>
 <svg class="abs" style="left:1407px;top:14px" width="22" height="22" viewBox="0 0 22 22"><ellipse cx="8" cy="7" rx="4.500" ry="5.500" fill="#111"/><ellipse cx="8" cy="14" rx="6" ry="6.500" fill="#111"/><ellipse cx="8" cy="15" rx="3.500" ry="4.500" fill="#fff"/><path d="M3 11.500c3 1.500 7 1.500 10 0v2.500c-3 1.500-7 1.500-10 0z" fill="#e0242a"/><ellipse cx="8" cy="8.500" rx="2.500" ry="1" fill="#f7b500"/><ellipse cx="5" cy="20.500" rx="3" ry="1.200" fill="#f7b500"/><ellipse cx="11" cy="20.500" rx="3" ry="1.200" fill="#f7b500"/><circle cx="6.500" cy="5.500" r="1.100" fill="#fff"/><circle cx="9.500" cy="5.500" r="1.100" fill="#fff"/><rect x="11" y="9" width="10" height="8" rx="1" fill="#f5a623"/><path d="M13 12h6M13 14.500h6" stroke="#fbe3a4" stroke-width="1"/></svg>
 <svg class="abs" style="left:1438px;top:14px" width="21" height="22" viewBox="0 0 21 22"><circle cx="11" cy="6.500" r="5" fill="#b9a79c"/><path d="M6 6c0-4 10-4 10 0-2-1.500-8-1.500-10 0z" fill="#8c7a70"/><path d="M3 22c0-6 3.500-9 8-9s8 3 8 9z" fill="#4f9c7d"/><circle cx="6.500" cy="15" r="3.500" fill="#e8ecef"/><path d="M9.500 13l2 3 2-3z" fill="#d8e6df"/></svg>
 <svg class="abs" style="left:1471px;top:15px" width="16" height="20" viewBox="0 0 16 20"><rect width="16" height="20" fill="#2d3850"/><path d="M4 0v11M8 0v11M12 0v11M0 4h16M0 8h16" stroke="#56617a" stroke-width=".8"/><rect x="1" y="11.500" width="14" height="6.500" fill="#6cc0f0"/><rect x=".5" y=".5" width="15" height="19" fill="none" stroke="#5a6684"/></svg>
 <svg class="abs" style="left:1498px;top:14px" width="22" height="23" viewBox="0 0 22 23"><path d="M9.500 1C7 3 4 3.500 1.500 3.500c0 8 2 13 8 16.500 6-3.500 8-8.500 8-16.500C15 3.500 12 3 9.500 1z" fill="#fff"/><path d="M9.500 1v19M1.500 9.500h16" stroke="#0c1530" stroke-width="1.300"/><circle cx="15.500" cy="16.500" r="5.500" fill="#1e9a4b"/><path d="M12.800 16.500l2 2 3.500-3.800" stroke="#fff" stroke-width="1.600" fill="none"/></svg>
 <svg class="abs" style="left:1530px;top:13px" width="16" height="24" viewBox="0 0 16 24"><ellipse cx="8" cy="12" rx="7.500" ry="11.500" fill="#1c7fe0"/><path d="M4 7.500l8 8-4 4v-15l4 4-8 8" stroke="#fff" stroke-width="1.400" fill="none"/></svg>
 <svg class="abs" style="left:1557px;top:15px" width="22" height="22" viewBox="0 0 22 22"><path d="M3 4h15l3 6v6H0v-6z" fill="#b9bec3"/><rect x="0" y="10" width="21" height="6" fill="#8c9298"/><path d="M6 13l4.500 6L20 4" stroke="#3db54a" stroke-width="3.200" fill="none"/></svg>
 <svg class="abs" style="left:1589px;top:15px" width="16" height="18" viewBox="0 0 16 18"><rect x="5" y="1" width="8" height="8" fill="#8f949c" stroke="#d9dce0"/><rect x="7.500" y="5" width="8" height="8" fill="#c9ccd2" stroke="#eef0f2"/><rect x=".5" y="7.500" width="8" height="8" fill="#f3f3f3" stroke="#b5b8bd"/></svg>
 <svg class="abs" style="left:1617px;top:13px" width="22" height="23" viewBox="0 0 22 23"><rect x="1" y="2" width="20" height="20" fill="#1467c4"/><circle cx="11" cy="12.500" r="7.500" fill="#fff"/><path d="M5.500 12.500h11M5.500 12.500l3-2.500v5zM16.500 12.500l-3-2.500v5z" stroke="#1467c4" stroke-width="1.600" fill="#1467c4"/><rect x="0" y="0" width="9" height="8" fill="#e81123"/><rect x="4" y="1.200" width="1.400" height="3.600" fill="#fff"/><rect x="4" y="5.600" width="1.400" height="1.300" fill="#fff"/></svg>
 <svg class="abs" style="left:1647px;top:18px" width="22" height="14" viewBox="0 0 22 14"><rect x="5.500" y="2.500" width="14" height="10" fill="none" stroke="#fff" stroke-width="1.400"/><rect x="20" y="5.500" width="1.800" height="4" fill="#fff"/><rect x="7" y="4" width="9" height="7" fill="#fff"/><path d="M1.500 1v2.500M4 1v2.500M.8 3.500h4v2.500a2 2 0 0 1-4 0zM2.800 8v3.500h3" stroke="#fff" stroke-width="1" fill="none"/></svg>
 <!-- wifi -->
 <svg class="abs" style="left:1677px;top:15px" width="22" height="22" viewBox="0 0 22 22"><g stroke="#fff" stroke-width="1.500" fill="none"><path d="M4 18A15 15 0 0 1 19 3"/><path d="M8 18A11 11 0 0 1 19 7"/><path d="M12 18a7 7 0 0 1 7-7"/></g><circle cx="17.500" cy="16.500" r="1.800" fill="#fff"/><path d="M6 9.500L11.500 19.500H.5z" fill="#f7c325"/><rect x="5.400" y="13" width="1.200" height="3.500" fill="#5a2d00"/><rect x="5.400" y="17.200" width="1.200" height="1.200" fill="#5a2d00"/></svg>
 <!-- volume -->
 <svg class="abs" style="left:1707px;top:15px" width="22" height="20" viewBox="0 0 22 20"><path d="M1 7h3.500L9 2.500v15L4.500 13H1z" stroke="#fff" stroke-width="1.200" fill="none"/><path d="M11.500 7a4 4 0 0 1 0 6M14 4.500a7.500 7.500 0 0 1 0 11" stroke="#fff" stroke-width="1.200" fill="none"/><path d="M16.800 2.500a10.500 10.500 0 0 1 0 15" stroke="#7d869c" stroke-width="1.100" fill="none"/></svg>
 <div class="abs" style="left:1738px;top:13px;width:20px;font-size:18px;line-height:24px;color:#fff;text-align:center">英</div>
 <div class="abs" id="t_clock" style="left:1757px;top:0px;width:100px;font-size:15px;line-height:24.5px;color:#fff;text-align:center;white-space:nowrap"><span style="font-size:15.5px">16:52</span><br><span style="font-size:16.5px">2019/11/3</span></div>
 <svg class="abs" style="left:1868px;top:14px" width="22" height="22" viewBox="0 0 22 22"><path d="M1.500 2h19v14.500h-6.500L11 19.500 8 16.500H1.500z" stroke="#fff" stroke-width="1.300" fill="none"/></svg>
 <div class="abs" style="left:1914px;top:0;width:1px;height:50px;background:#6b7285"></div>

</div>

</body>
</html>
